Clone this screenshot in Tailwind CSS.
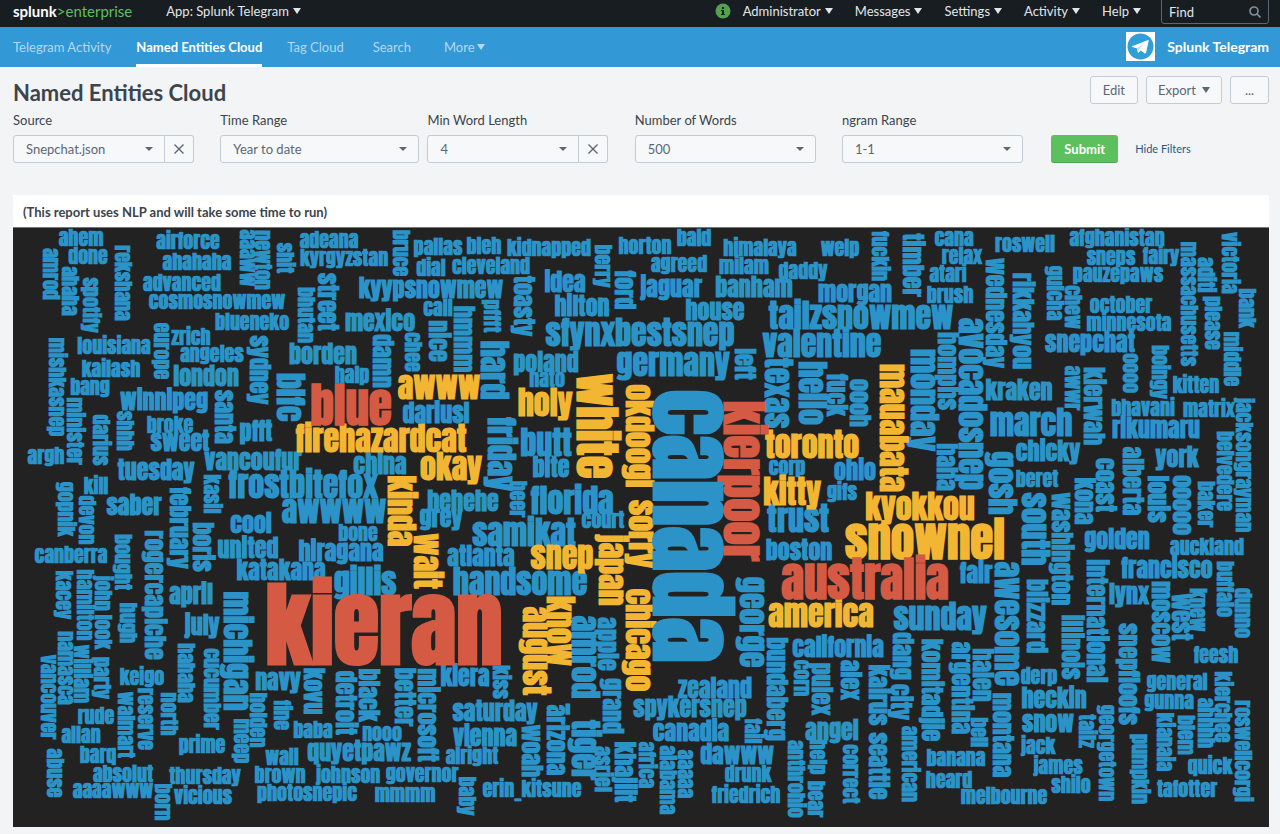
<!DOCTYPE html>
<html lang="en">
<head>
<meta charset="utf-8">
<meta name="viewport" content="width=device-width, initial-scale=1">
<title>Named Entities Cloud</title>
<script src="https://cdn.jsdelivr.net/npm/@tailwindcss/browser@4"></script>
</head>
<body class="min-h-screen bg-[#f2f4f5] font-['Lato','Liberation_Sans',sans-serif] text-[13px] leading-4 text-[#3c444d]">

<header class="flex h-[27px] items-start bg-[#171d21] pt-[3px] pr-[11px] pl-[13px] text-[#e1e6eb]">
  <a href="#" class="mr-[34px] text-[15px] leading-4 font-bold text-white">splunk<span class="font-normal text-[#5cc05c]">&gt;enterprise</span></a>
  <button class="flex items-center gap-1">App: Splunk Telegram <svg class="h-[6px] w-2 fill-current" viewBox="0 0 8 6"><path d="M0 0h8L4 6z"/></svg></button>
  <nav class="ml-auto flex items-start gap-[22px]" aria-label="System">
    <button class="flex items-center gap-1"><svg class="mr-2 size-4" viewBox="0 0 16 16"><circle cx="8" cy="8" r="7.5" fill="#53a051"/><path d="M7 4h2v2H7zM6 7h3v4h1v1H6v-1h1V8H6z" fill="#171d21"/></svg>Administrator <svg class="h-[6px] w-2 fill-current" viewBox="0 0 8 6"><path d="M0 0h8L4 6z"/></svg></button>
    <button class="flex items-center gap-1">Messages <svg class="h-[6px] w-2 fill-current" viewBox="0 0 8 6"><path d="M0 0h8L4 6z"/></svg></button>
    <button class="flex items-center gap-1">Settings <svg class="h-[6px] w-2 fill-current" viewBox="0 0 8 6"><path d="M0 0h8L4 6z"/></svg></button>
    <button class="flex items-center gap-1">Activity <svg class="h-[6px] w-2 fill-current" viewBox="0 0 8 6"><path d="M0 0h8L4 6z"/></svg></button>
    <button class="flex items-center gap-1">Help <svg class="h-[6px] w-2 fill-current" viewBox="0 0 8 6"><path d="M0 0h8L4 6z"/></svg></button>
    <form class="-mt-[5px] -ml-[2px] flex h-[26px] w-[108px] items-center rounded-[3px] border border-[#5c6773] px-[7px] pt-[2px]">
      <input type="search" aria-label="Find" placeholder="Find" class="w-full min-w-0 bg-transparent outline-none placeholder:text-[#e1e6eb]">
      <svg class="size-3 shrink-0" viewBox="0 0 12 12" fill="none" stroke="#818d99" stroke-width="1.7"><circle cx="5" cy="5" r="4"/><path d="M8 8l3.500 3.500"/></svg>
    </form>
  </nav>
</header>

<div class="flex h-10 items-stretch bg-[#3298d6] pr-[11px] pb-px pl-[13px]">
  <nav class="-mb-px flex items-stretch gap-[25px] text-[#b3d8f0]" aria-label="App">
    <a href="#" class="flex items-center pb-px">Telegram Activity</a>
    <a href="#" class="flex items-center border-b-[3px] border-white pt-[2px] font-bold text-white" aria-current="page">Named Entities Cloud</a>
    <a href="#" class="flex items-center pb-px">Tag Cloud</a>
    <a href="#" class="ml-1 flex items-center pb-px">Search</a>
    <button class="ml-2 flex items-center gap-[2px] pb-px">More <svg class="h-[6px] w-2 fill-current" viewBox="0 0 8 6"><path d="M0 0h8L4 6z"/></svg></button>
  </nav>
  <a href="#" class="ml-auto flex items-center gap-3 text-sm font-bold text-white">
    <svg class="size-[29px]" viewBox="0 0 29 29"><rect width="29" height="29" fill="#fff"/><circle cx="14.500" cy="14.500" r="13" fill="#2f9fd8"/><path d="M6 14.300 21.500 8.200c.8-.3 1.300.1 1.100 1.100l-2.500 11.400c-.2.800-.8 1-1.500.6l-3.800-2.800-2 2c-.4.400-.9.300-1-.3l-1-3.900-4.500-1.400c-.6-.2-.7-.4-.3-.6z" fill="#fff"/><path d="M10.800 16.300 19 10.800l-6.200 6.500-.7 3.200z" fill="#c8dbe8"/></svg>
    Splunk Telegram
  </a>
</div>

<main class="pr-[11px] pb-[7px] pl-[13px]">
  <div class="flex h-[41px] items-start justify-between pt-[9px]">
    <h1 class="pt-[3px] text-[22px] leading-7 font-bold">Named Entities Cloud</h1>
    <div class="flex gap-2 text-[#5c6773]">
      <button class="h-7 rounded-[3px] border border-[#c3cbd4] bg-[#f7f8fa] px-3">Edit</button>
      <button class="flex h-7 items-center gap-[6px] rounded-[3px] border border-[#c3cbd4] bg-[#f7f8fa] px-[11px]">Export <svg class="h-[6px] w-2 fill-current" viewBox="0 0 8 6"><path d="M0 0h8L4 6z"/></svg></button>
      <button class="h-7 w-[39px] rounded-[3px] border border-[#c3cbd4] bg-[#f7f8fa]" aria-label="More actions">...</button>
    </div>
  </div>

  <form class="flex items-end pt-1">
    <div class="w-[16.5%] shrink-0">
      <label for="source" class="mb-[7px] block">Source</label>
      <div class="flex w-[181px] text-[#5c6773]">
        <div class="relative grow"><select id="source" class="h-7 w-full appearance-none rounded-l-[3px] border border-[#c3cbd4] bg-[#f7f8fa] px-3"><option>Snepchat.json</option></select>
        <svg class="pointer-events-none absolute top-3 right-3 h-1 w-2 fill-current" viewBox="0 0 8 4"><path d="M0 0h8L4 4z"/></svg></div>
        <button type="button" aria-label="Clear source" class="flex h-7 w-[29px] items-center justify-center rounded-r-[3px] border border-l-0 border-[#c3cbd4] bg-[#f7f8fa]"><svg class="size-[10px]" viewBox="0 0 10 10" fill="none" stroke="currentColor" stroke-width="1.400"><path d="M.5.5l9 9M9.500.5l-9 9"/></svg></button>
      </div>
    </div>
    <div class="w-[16.5%] shrink-0">
      <label for="time" class="mb-[7px] block">Time Range</label>
      <div class="relative w-[199px] text-[#5c6773]"><select id="time" class="h-7 w-full appearance-none rounded-[3px] border border-[#c3cbd4] bg-[#f7f8fa] px-3"><option>Year to date</option></select>
      <svg class="pointer-events-none absolute top-3 right-3 h-1 w-2 fill-current" viewBox="0 0 8 4"><path d="M0 0h8L4 4z"/></svg></div>
    </div>
    <div class="w-[16.5%] shrink-0">
      <label for="length" class="mb-[7px] block">Min Word Length</label>
      <div class="flex w-[181px] text-[#5c6773]">
        <div class="relative grow"><select id="length" class="h-7 w-full appearance-none rounded-l-[3px] border border-[#c3cbd4] bg-[#f7f8fa] px-3"><option>4</option></select>
        <svg class="pointer-events-none absolute top-3 right-3 h-1 w-2 fill-current" viewBox="0 0 8 4"><path d="M0 0h8L4 4z"/></svg></div>
        <button type="button" aria-label="Clear min word length" class="flex h-7 w-[29px] items-center justify-center rounded-r-[3px] border border-l-0 border-[#c3cbd4] bg-[#f7f8fa]"><svg class="size-[10px]" viewBox="0 0 10 10" fill="none" stroke="currentColor" stroke-width="1.400"><path d="M.5.5l9 9M9.500.5l-9 9"/></svg></button>
      </div>
    </div>
    <div class="w-[16.5%] shrink-0">
      <label for="count" class="mb-[7px] block">Number of Words</label>
      <div class="relative w-[181px] text-[#5c6773]"><select id="count" class="h-7 w-full appearance-none rounded-[3px] border border-[#c3cbd4] bg-[#f7f8fa] px-3"><option>500</option></select>
      <svg class="pointer-events-none absolute top-3 right-3 h-1 w-2 fill-current" viewBox="0 0 8 4"><path d="M0 0h8L4 4z"/></svg></div>
    </div>
    <div class="w-[16.5%] shrink-0">
      <label for="ngram" class="mb-[7px] block">ngram Range</label>
      <div class="relative w-[181px] text-[#5c6773]"><select id="ngram" class="h-7 w-full appearance-none rounded-[3px] border border-[#c3cbd4] bg-[#f7f8fa] px-3"><option>1-1</option></select>
      <svg class="pointer-events-none absolute top-3 right-3 h-1 w-2 fill-current" viewBox="0 0 8 4"><path d="M0 0h8L4 4z"/></svg></div>
    </div>
    <button type="button" class="ml-[2px] h-7 w-[67px] shrink-0 rounded-[3px] border-b border-[#4fa54f] bg-[#5cc05c] font-bold text-white">Submit</button>
    <a href="#" class="ml-[17px] flex h-7 items-center text-[11px] whitespace-nowrap text-[#1e5a8e]">Hide Filters</a>
  </form>

  <section class="mt-8 bg-white">
    <h2 class="flex h-8 items-center px-[10px] pt-px font-bold">(This report uses NLP and will take some time to run)</h2>
    <svg id="cloud" class="block w-full border-t border-[#777] bg-[#222] font-[Anton,Impact,'Roboto_Condensed',sans-serif] font-bold" viewBox="13 228 1256 599" text-anchor="middle" role="img" aria-label="Named entities word cloud"></svg>
  </section>
</main>

<script>
// Each entry: word, first edge, last edge, baseline. Across: edges are x, baseline is y.
// Down: edges are y, baseline is x and the word is turned a quarter clockwise.
const styles = {
  s: "text-[20px] fill-[#2b93c7]",
  m: "text-[24px] fill-[#2b93c7]",
  l: "text-[32px] fill-[#2b93c7]",
  y: "text-[32px] fill-[#f2b632]",
  Y: "text-[47px] fill-[#f2b632]",
  R: "text-[47px] fill-[#d55a43]",
  X: "text-[93px] fill-[#d55a43]",
  B: "text-[93px] fill-[#2b93c7]"
};
const across = {
  s: `ahem 58 103 245;done 67 108 263;airforce 155 220 248;ahahaha 162 232 269;advanced 142 221 290;cosmosnowmew 148 285 308;blueneko 214 290 329;zrich 171 211 344;angeles 179 244 361;louisiana 76 151 353;kailash 81 141 376;bang 70 109 394;broke 146 193 432;argh 27 65 463;kill 83 109 493;adeana 298 359 247;kyrgyzstan 300 387 265;pallas 413 463 254;bleh 466 501 253;kidnapped 506 591 255;dial 416 446 275;cleveland 451 531 273;call 423 453 315;halp 334 370 382;horton 618 671 253;bald 677 711 245;himalaya 723 797 255;agreed 650 708 271;milam 719 769 273;nato 529 565 386;court 581 625 527;welp 820 859 255;cana 934 974 245;relax 941 982 263;atari 929 966 281;brush 926 973 302;roswell 994 1055 251;daddy 778 828 278;corp 769 805 474;gifs 826 857 499;afghanistan 1068 1165 245;sneps 1086 1135 264;fairy 1142 1179 263;pauzepaws 1072 1163 281;october 1089 1152 312;minnesota 1085 1172 330;kitten 1173 1219 392;bhavani 1110 1175 415;matrix 1183 1235 416;beret 1015 1059 486;canberra 34 108 562;keigo 119 164 684;rude 77 114 723;allan 61 101 742;barq 80 116 762;prime 178 225 752;absolut 92 154 781;aaaawww 73 153 797;thursday 169 241 783;vicious 173 232 803;bone 338 378 540;baba 293 333 737;nooo 362 402 740;wall 265 299 764;alright 445 499 763;brown 255 305 782;johnson 315 380 782;governor 385 459 781;photosnepic 256 358 800;mmmm 374 435 801;erin_kitsune 480 584 796;drunk 724 771 781;friedrich 710 781 802;banana 926 986 765;heard 925 973 787;melbourne 959 1048 803;auckland 1169 1244 554;feesh 1193 1238 662;derp 1020 1058 683;general 1145 1208 689;gunna 1143 1194 708;jack 1020 1055 753;james 1033 1083 773;shilo 1051 1091 792;quick 1187 1233 773;tafotter 1156 1218 796`,
  m: `london 171 240 385;winnipeg 117 210 409;sweet 150 210 450;pfft 239 272 440;vancoufur 202 303 469;tuesday 116 196 479;saber 105 162 514;cool 229 272 532;kyypsnowmew 358 504 297;mexico 344 416 330;borden 287 358 363;dariusl 400 471 422;china 352 408 473;hehehe 425 501 510;grey 418 463 526;idea 543 586 291;jaguar 639 703 296;banham 713 794 296;hilton 553 611 315;house 684 745 319;poland 512 580 371;bite 531 570 476;morgan 816 893 301;kraken 985 1053 399;ohio 833 876 479;snepchat 1043 1136 351;rikumaru 1110 1202 437;chicky 1015 1081 460;york 1155 1199 466;united 216 280 557;katakana 235 326 579;april 168 214 603;july 184 220 634;navy 255 301 689;hiragana 296 385 560;atlanta 446 516 565;kiera 439 490 685;saturday 451 539 720;vienna 451 518 745;quyetpawz 306 412 760;zealand 676 753 697;spykersnep 631 748 716;canadia 650 731 740;dawww 700 773 763;boston 765 833 559;fair 959 993 582;california 789 886 656;angel 804 860 739;golden 1083 1151 548;francisco 1119 1214 577;lynx 1108 1149 603;heckin 1020 1087 707;snow 1021 1074 731`,
  l: `frostbitefox 225 380 497;awwww 283 385 522;samikat 470 577 545;sfynxbestsnep 543 737 345;germany 614 731 375;butt 519 572 455;florida 528 616 513;tailzsnowmew 766 956 328;valentine 760 884 356;march 989 1073 435;trust 766 829 531;gillis 331 398 594;handsome 450 589 594;sunday 891 988 629`,
  y: `awww 398 479 398;firehazardcat 291 470 451;okay 420 482 479;holy 516 574 415;toronto 763 860 457;kitty 763 821 504;kyokkou 865 975 519;snep 529 594 568;america 766 876 626`,
  Y: `snownel 839 1010 558`,
  R: `blue 307 395 424;australia 774 956 598`,
  X: `kieran 255 512 663`
};
const down = {
  s: `amrod 248 299 44;ahaha 265 316 63;spotify 277 333 84;rekshana 245 321 116;newton 230 289 256;aaaww 230 286 241;europe 321 380 155;mishkasnep 337 437 50;minister 397 465 68;darius 414 466 94;shhh 411 451 118;kasil 474 514 205;gopnik 481 537 59;devon 495 544 80;shit 242 273 278;bhutan 287 343 299;bruce 230 276 394;chee 332 372 406;pffft 299 332 485;beer 482 516 511;berry 244 288 596;fuckin 230 281 873;gulcha 265 321 1048;chew 285 329 1066;oooo 353 393 1124;massachusetts 241 366 1182;aditi 256 293 1199;please 295 350 1206;victoria 231 294 1223;bank 288 327 1240;middle 330 387 1225;boingy 344 399 1153;awwr 366 410 1066;jacksongrayman 397 533 1237;belvedere 430 512 1218;baker 481 527 1199;bought 533 590 116;kacey 570 619 57;hamilton 568 641 78;john 575 611 96;look 615 649 96;hugh 602 643 121;namasca 630 705 59;vancouver 654 739 42;william 644 704 75;party 657 699 95;hahaha 642 703 179;cucumber 647 731 205;reserve 688 750 139;walmart 691 758 119;north 692 736 162;meep 718 764 235;holden 692 748 251;abuse 748 798 48;born 783 821 156;kiss 665 698 494;fine 699 731 275;baby 776 816 460;asriel 745 793 596;africa 741 789 640;alabama 744 815 661;aaaaa 749 799 679;fail 718 744 746;corn 659 697 795;bell 717 747 972;anthrohio 739 818 789;help 739 775 811;bear 780 817 809;correct 744 804 844;american 725 802 903;knew 588 631 1191;buffalo 560 617 1218;dunno 587 638 1236;kierchee 671 743 1216;ahhhh 697 748 1199;roswellcorgi 699 802 1236;tailz 714 748 1080;georgetown 704 802 1100;kianaia 712 772 1158;blem 715 755 1179;pumpkin 733 804 1133`,
  m: `sydney 334 405 251;santa 389 444 216;february 484 571 171;boris 521 573 194;street 273 331 319;damn 333 388 374;nice 319 362 430;hmmm 305 373 455;toasty 274 337 515;ford 270 310 616;left 347 380 736;timber 231 298 904;wednesday 256 370 987;homphs 330 411 939;fuck 373 417 828;oooh 378 428 851;haha 442 492 938;rikkahyou 271 370 1014;kierwah 366 446 1085;alberta 445 517 1124;coast 457 512 1097;louis 474 523 1149;ooooo 474 535 1174;washington 490 607 1053;kona 477 525 1076;rogercapiche 528 662 146;kovu 668 714 305;detroit 669 736 337;black 667 722 360;better 666 727 396;microsoft 667 763 419;woah 724 777 523;apple 615 672 599;grand 677 735 604;arizona 703 776 548;khajiit 743 800 616;bundaberg 634 743 768;pulex 662 716 813;alex 659 701 842;kairus 663 726 870;seattle 731 801 870;dang 631 681 894;city 683 720 892;komitadjie 636 743 923;argentina 639 737 953;halen 647 703 974;montana 691 779 994;international 556 686 1088;moscow 580 663 1153;west 593 641 1173;blizzard 578 654 1028;illinois 612 681 1063;snepfloofs 621 727 1120`,
  l: `hard 340 400 482;blfc 371 422 278;friday 415 493 489;avocadosnep 315 493 960;texas 357 429 766;hello 360 426 800;monday 347 453 912;gosh 450 515 990;south 491 566 1023;michigan 588 713 225;amrod 614 699 573;_ 699 718 573;tiger 718 782 573;george 575 669 741;awesome 560 687 996`,
  y: `kinda 474 548 389;okdoogl 382 489 627;sorry 499 569 630;mauabata 361 494 881;wait 533 589 415;japan 532 607 600;know 596 666 548;august 605 697 524;chicago 586 693 627`,
  Y: `white 369 482 578`,
  R: `kierpoor 393 569 725`,
  B: `canada 377 675 655`
};
const cloud = document.getElementById("cloud");
function draw(groups, turned) {
  for (const [size, list] of Object.entries(groups)) {
    for (const entry of list.split(";")) {
      const [word, from, to, base] = entry.split(" ");
      const mid = Math.round((+from + +to) / 2);
      const t = document.createElementNS("http://www.w3.org/2000/svg", "text");
      t.setAttribute("class", styles[size]);
      t.setAttribute("dy", 1);
      t.setAttribute("transform", turned ? `translate(${base} ${mid}) rotate(90)` : `translate(${mid} ${base})`);
      t.textContent = word;
      cloud.appendChild(t);
    }
  }
}
draw(across, false);
draw(down, true);
</script>
</body>
</html>
